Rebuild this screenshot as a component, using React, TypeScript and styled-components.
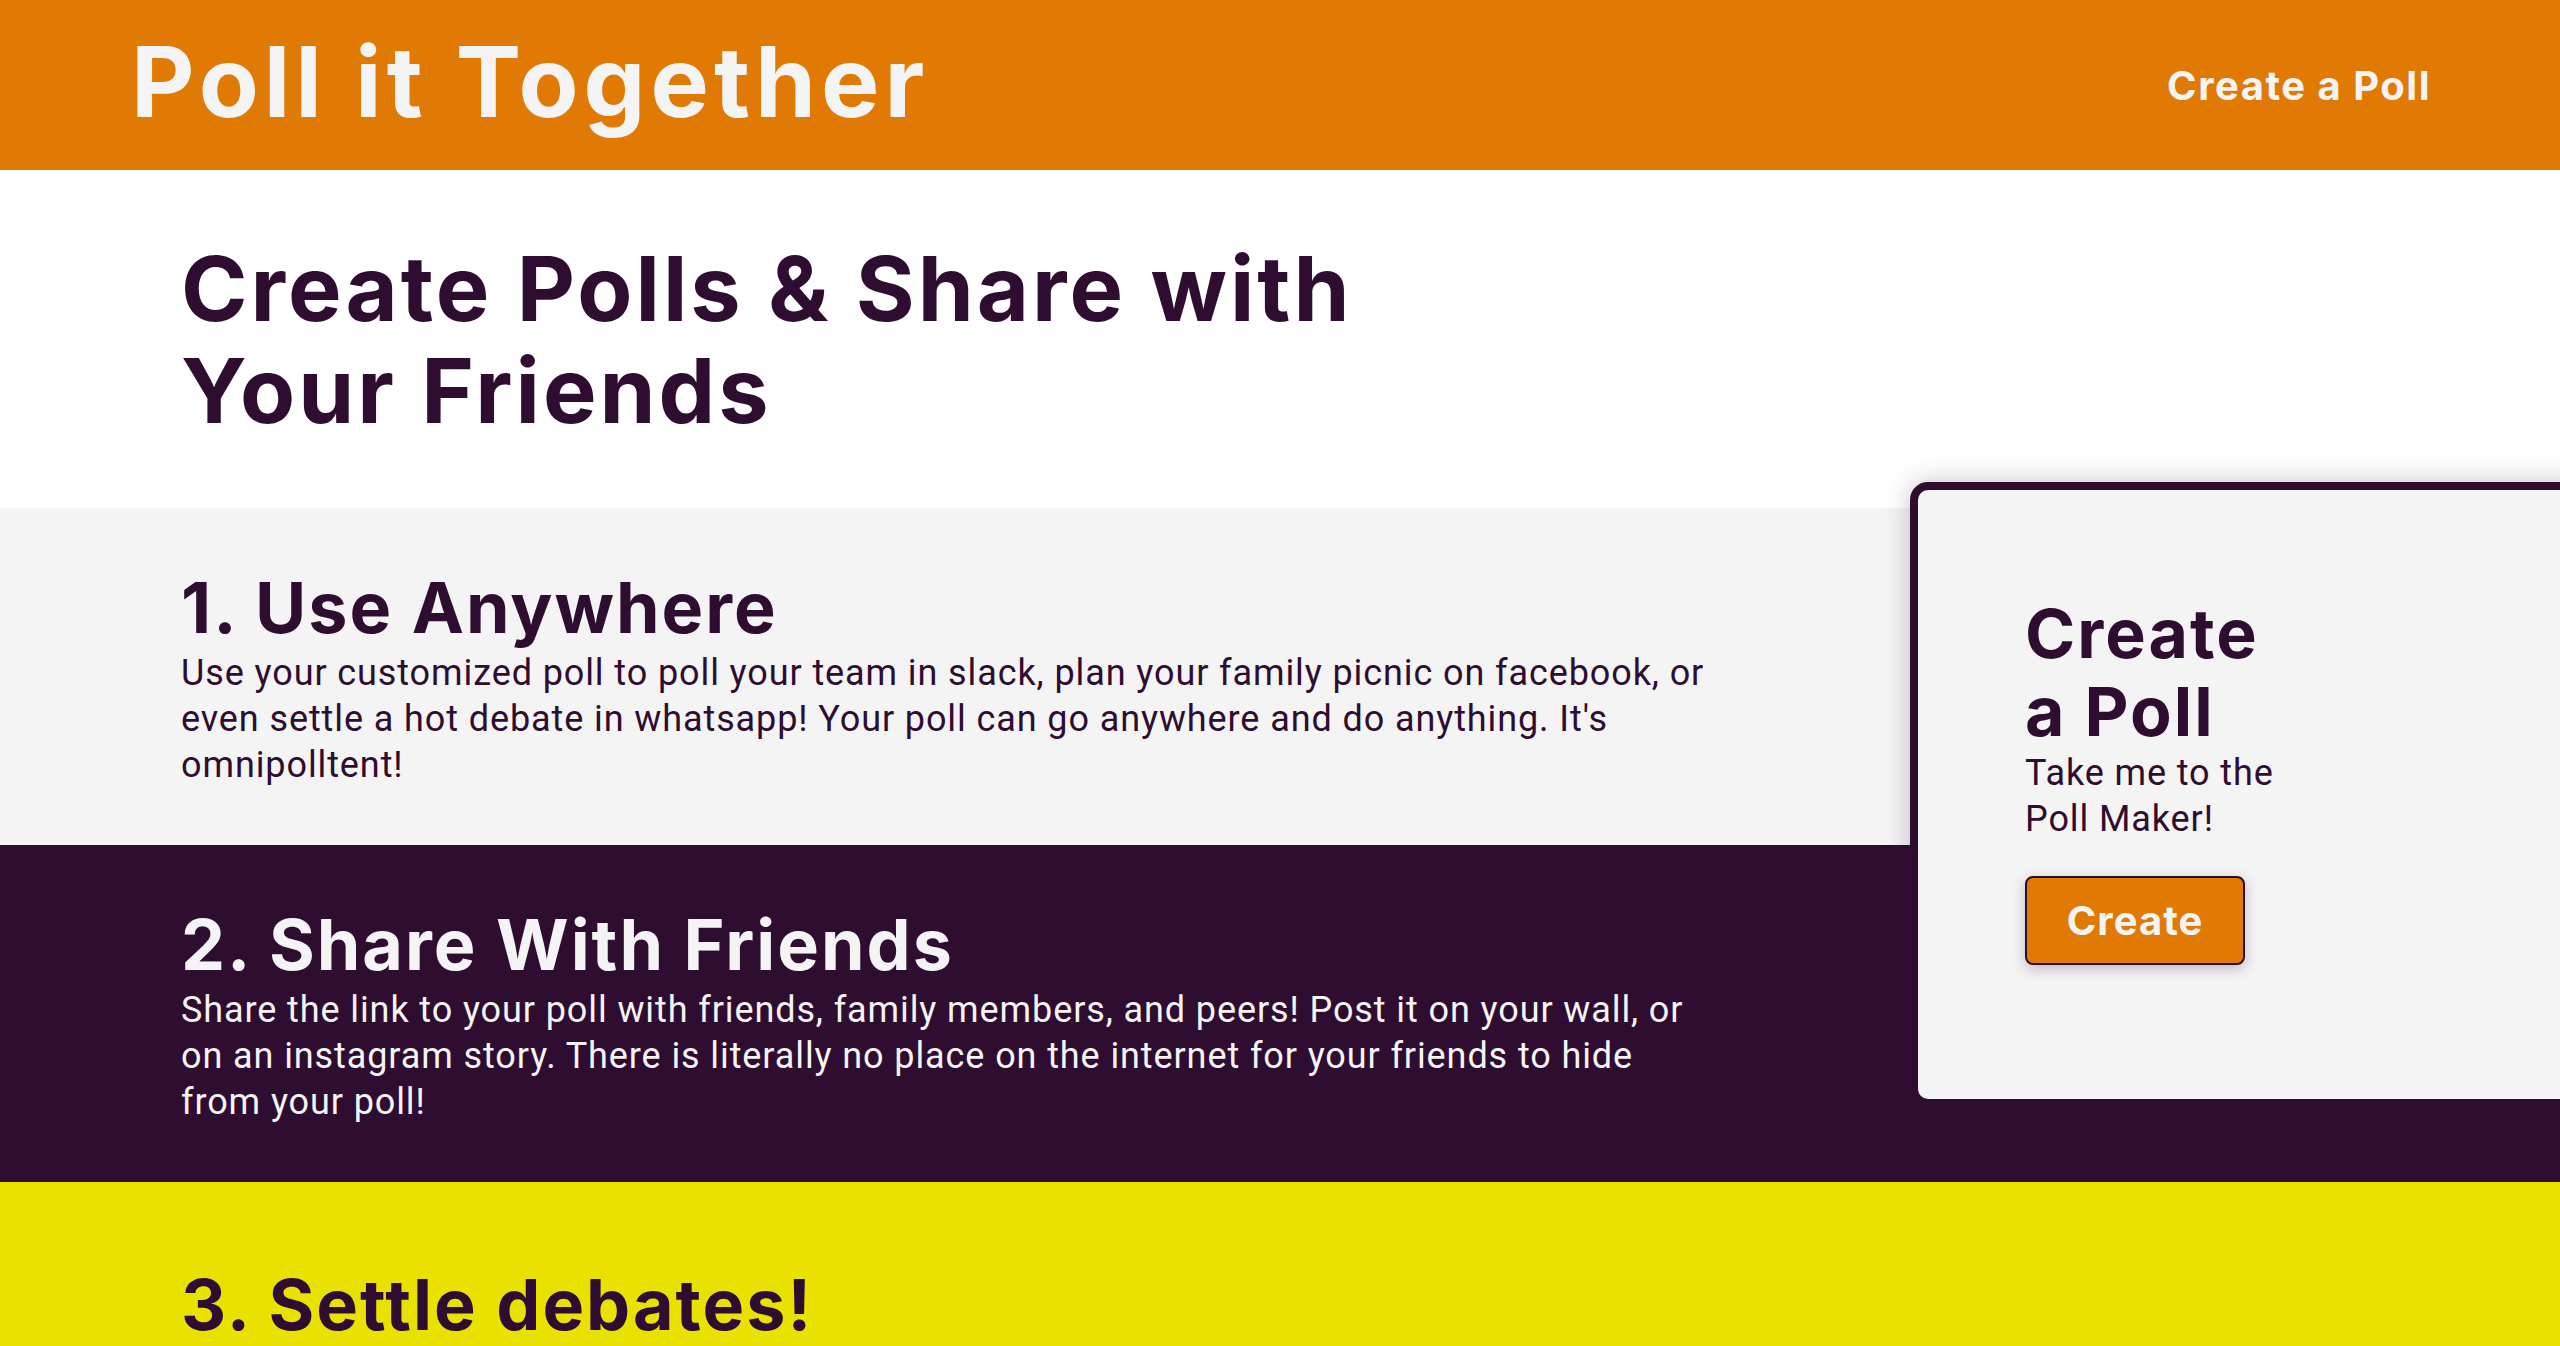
import React from 'react'
import styled, { createGlobalStyle } from 'styled-components'

const ORANGE = '#E07A05'
const PURPLE = '#2E0D30'
const LIGHT = '#F4F4F4'
const YELLOW = '#E9E100'

const GlobalStyle = createGlobalStyle`
  body {
    margin: 0;
    overflow-x: hidden;
    background: #ffffff;
    font-family: Roboto, "Noto Sans", sans-serif;
  }
  * {
    box-sizing: border-box;
  }
`

const Header = styled.header`
  display: flex;
  align-items: center;
  justify-content: space-between;
  height: 170px;
  padding: 0 129px 0 131px;
  background: ${ORANGE};
`

const Brand = styled.h1`
  margin: -8px 0 0;
  color: ${LIGHT};
  font-family: Inter, "DejaVu Sans", sans-serif;
  font-weight: 700;
  font-size: 98px;
  letter-spacing: 5px;
`

const NavLink = styled.a`
  color: ${LIGHT};
  font-family: Inter, "DejaVu Sans", sans-serif;
  font-weight: 700;
  font-size: 40px;
  letter-spacing: 1.5px;
  text-decoration: none;
  cursor: pointer;
`

const Main = styled.main`
  position: relative;
`

const Hero = styled.section`
  height: 338px;
  padding: 68px 0 0 181px;
  background: #ffffff;
`

const HeroTitle = styled.h2`
  margin: 0;
  max-width: 1250px;
  color: ${PURPLE};
  font-family: Inter, "DejaVu Sans", sans-serif;
  font-weight: 700;
  font-size: 90px;
  line-height: 102px;
  letter-spacing: 3px;
`

const Steps = styled.div`
  position: relative;
`

const Step = styled.section<{ $bg: string; $fg: string; $top?: number }>`
  height: 337px;
  padding: ${({ $top }) => $top ?? 60}px 0 0 181px;
  background: ${({ $bg }) => $bg};
  color: ${({ $fg }) => $fg};
`

const StepTitle = styled.h3`
  margin: 0;
  font-family: Inter, "DejaVu Sans", sans-serif;
  font-weight: 700;
  font-size: 70px;
  line-height: 80px;
  letter-spacing: 2px;
`

const StepText = styled.p`
  margin: 2px 0 0;
  max-width: 1530px;
  font-family: Roboto, sans-serif;
  font-weight: 400;
  font-size: 36px;
  line-height: 46px;
  letter-spacing: 0.9px;
`

const Card = styled.aside`
  position: absolute;
  top: -26px;
  left: 1910px;
  width: 720px;
  height: 625px;
  padding: 104px 0 0 107px;
  background: ${LIGHT};
  border: 8px solid ${PURPLE};
  border-radius: 18px;
  box-shadow: 0 0 26px rgba(46, 13, 48, 0.25);
`

const CardInner = styled.div`
  max-width: 268px;
`

const CardTitle = styled.h3`
  margin: 0;
  color: ${PURPLE};
  font-family: Inter, "DejaVu Sans", sans-serif;
  font-weight: 700;
  font-size: 68px;
  line-height: 78px;
  letter-spacing: 2px;
`

const CardText = styled.p`
  margin: 0;
  color: ${PURPLE};
  font-family: Roboto, sans-serif;
  font-size: 36px;
  line-height: 46px;
  letter-spacing: 0.9px;
`

const CreateButton = styled.button`
  display: flex;
  align-items: center;
  justify-content: center;
  width: 220px;
  height: 89px;
  margin-top: 34px;
  padding: 0;
  background: ${ORANGE};
  color: ${LIGHT};
  border: 2px solid ${PURPLE};
  border-radius: 8px;
  box-shadow: 0 4px 14px rgba(46, 13, 48, 0.25);
  font-family: Inter, "DejaVu Sans", sans-serif;
  font-weight: 700;
  font-size: 40px;
  letter-spacing: 1px;
  cursor: pointer;
`

const steps = [
  {
    title: '1. Use Anywhere',
    text: "Use your customized poll to poll your team in slack, plan your family picnic on facebook, or even settle a hot debate in whatsapp! Your poll can go anywhere and do anything. It's omnipolltent!",
    bg: LIGHT,
    fg: PURPLE,
  },
  {
    title: '2. Share With Friends',
    text: 'Share the link to your poll with friends, family members, and peers! Post it on your wall, or on an instagram story. There is literally no place on the internet for your friends to hide from your poll!',
    bg: PURPLE,
    fg: LIGHT,
  },
  {
    title: '3. Settle debates!',
    text: '',
    bg: YELLOW,
    fg: PURPLE,
    top: 83,
  },
]

const App: React.FC = () => {
  return (
    <>
      <GlobalStyle />
      <Header>
        <Brand>Poll it Together</Brand>
        <NavLink>Create a Poll</NavLink>
      </Header>
      <Main>
        <Hero>
          <HeroTitle>Create Polls &amp; Share with Your Friends</HeroTitle>
        </Hero>
        <Steps>
          {steps.map((s) => (
            <Step key={s.title} $bg={s.bg} $fg={s.fg} $top={s.top}>
              <StepTitle>{s.title}</StepTitle>
              {s.text && <StepText>{s.text}</StepText>}
            </Step>
          ))}
          <Card>
            <CardInner>
              <CardTitle>Create a Poll</CardTitle>
              <CardText>Take me to the Poll Maker!</CardText>
              <CreateButton>Create</CreateButton>
            </CardInner>
          </Card>
        </Steps>
      </Main>
    </>
  )
}

export default App
